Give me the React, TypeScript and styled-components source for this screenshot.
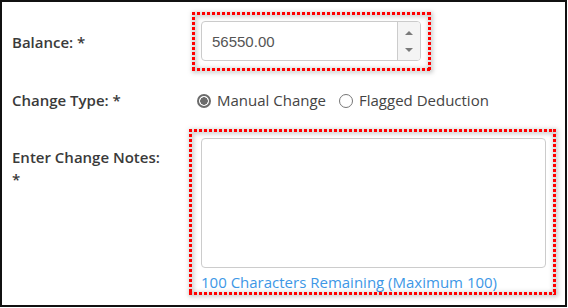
import React from 'react';
import styled, { createGlobalStyle } from 'styled-components';

const GlobalStyle = createGlobalStyle`
  html, body {
    margin: 0;
    padding: 0;
    background: #fff;
  }
  body {
    font-family: 'Open Sans', 'Noto Sans', Arial, sans-serif;
  }
`;

const Panel = styled.div`
  width: 567px;
  height: 307px;
  box-sizing: border-box;
  border: 2px solid #111;
  padding: 10px 0 0 10px;
  display: grid;
  grid-template-columns: 177px 1fr;
  grid-template-rows: 59px 58px auto;
  color: #333;
  font-size: 15px;
`;

const Label = styled.label<{ top?: number }>`
  font-weight: 600;
  color: #3a3a3a;
  line-height: 22px;
  max-width: 152px;
  align-self: ${p => (p.top !== undefined ? 'start' : 'center')};
  margin-top: ${p => (p.top !== undefined ? `${p.top}px` : '0')};
`;

// red dotted annotation frame around a field
const Highlight = styled.div<{ shiftLeft?: number }>`
  position: relative;
  box-sizing: border-box;
  margin-left: ${p => p.shiftLeft || 0}px;

  &::before {
    content: '';
    position: absolute;
    inset: 0;
    pointer-events: none;
    background:
      repeating-linear-gradient(90deg, #f00 0 3px, transparent 3px 5px) left top / 100% 3px no-repeat,
      repeating-linear-gradient(90deg, #f00 0 3px, transparent 3px 5px) left bottom / 100% 3px no-repeat,
      repeating-linear-gradient(180deg, #f00 0 3px, transparent 3px 5px) left top / 3px 100% no-repeat,
      repeating-linear-gradient(180deg, #f00 0 3px, transparent 3px 5px) right top / 3px 100% no-repeat;
    filter: drop-shadow(1px 1px 2.5px rgba(0, 0, 0, 0.5));
  }
`;

const BalanceFrame = styled(Highlight)`
  width: 239px;
  height: 59px;
  padding: 9px 10px 10px 9px;
`;

const NotesFrame = styled(Highlight)`
  width: 367px;
  height: 166px;
  padding: 9px 10px 3px 12px;
`;

const NumberBox = styled.div`
  display: flex;
  height: 40px;
  box-sizing: border-box;
  border: 1px solid #ccc;
  border-radius: 4px;
  overflow: hidden;
  background: #fff;
`;

const NumberValue = styled.input`
  flex: 1;
  min-width: 0;
  border: none;
  outline: none;
  padding: 0 0 0 10px;
  font-family: 'Liberation Sans', Arial, sans-serif;
  font-size: 15px;
  color: #555;
  background: transparent;
`;

const Spinner = styled.div`
  width: 22px;
  border-left: 1px solid #ccc;
  background: #f4f4f4;
  display: flex;
  flex-direction: column;
  align-items: center;
  justify-content: space-between;
  padding: 9px 0 8px;
`;

const Arrow = styled.span<{ down?: boolean }>`
  width: 0;
  height: 0;
  border-left: 4px solid transparent;
  border-right: 4px solid transparent;
  ${p => (p.down ? 'border-top: 4px solid #7a7a7a;' : 'border-bottom: 4px solid #7a7a7a;')}
`;

const RadioGroup = styled.div`
  display: flex;
  align-items: center;
  margin-left: 8px;
  gap: 13px;
  color: #444;
`;

const RadioOption = styled.label`
  display: flex;
  align-items: center;
  gap: 6px;
`;

const RadioDot = styled.span<{ checked?: boolean }>`
  width: 14px;
  height: 14px;
  box-sizing: border-box;
  border-radius: 50%;
  border: ${p => (p.checked ? '2px solid #6b6b6b' : '1px solid #767676')};
  background: ${p => (p.checked ? 'radial-gradient(circle, #6b6b6b 0 3.5px, #fff 4px)' : '#fff')};
  margin-top: 1px;
`;

const NotesArea = styled.textarea`
  display: block;
  width: 345px;
  height: 130px;
  box-sizing: border-box;
  border: 1px solid #ccc;
  border-radius: 4px;
  resize: none;
  outline: none;
  margin: 0;
`;

const Counter = styled.div`
  color: #3d97e6;
  line-height: 20px;
  margin-top: 4px;
  white-space: nowrap;
`;

export default function App() {
  return (
    <>
      <GlobalStyle />
      <Panel>
        <Label>Balance: *</Label>
        <BalanceFrame shiftLeft={3}>
          <NumberBox>
            <NumberValue value="56550.00" readOnly />
            <Spinner>
              <Arrow />
              <Arrow down />
            </Spinner>
          </NumberBox>
        </BalanceFrame>

        <Label>Change Type: *</Label>
        <RadioGroup>
          <RadioOption>
            <RadioDot checked />
            Manual Change
          </RadioOption>
          <RadioOption>
            <RadioDot />
            Flagged Deduction
          </RadioOption>
        </RadioGroup>

        <Label top={17}>Enter Change Notes: *</Label>
        <NotesFrame>
          <NotesArea />
          <Counter>100 Characters Remaining (Maximum 100)</Counter>
        </NotesFrame>
      </Panel>
    </>
  );
}
